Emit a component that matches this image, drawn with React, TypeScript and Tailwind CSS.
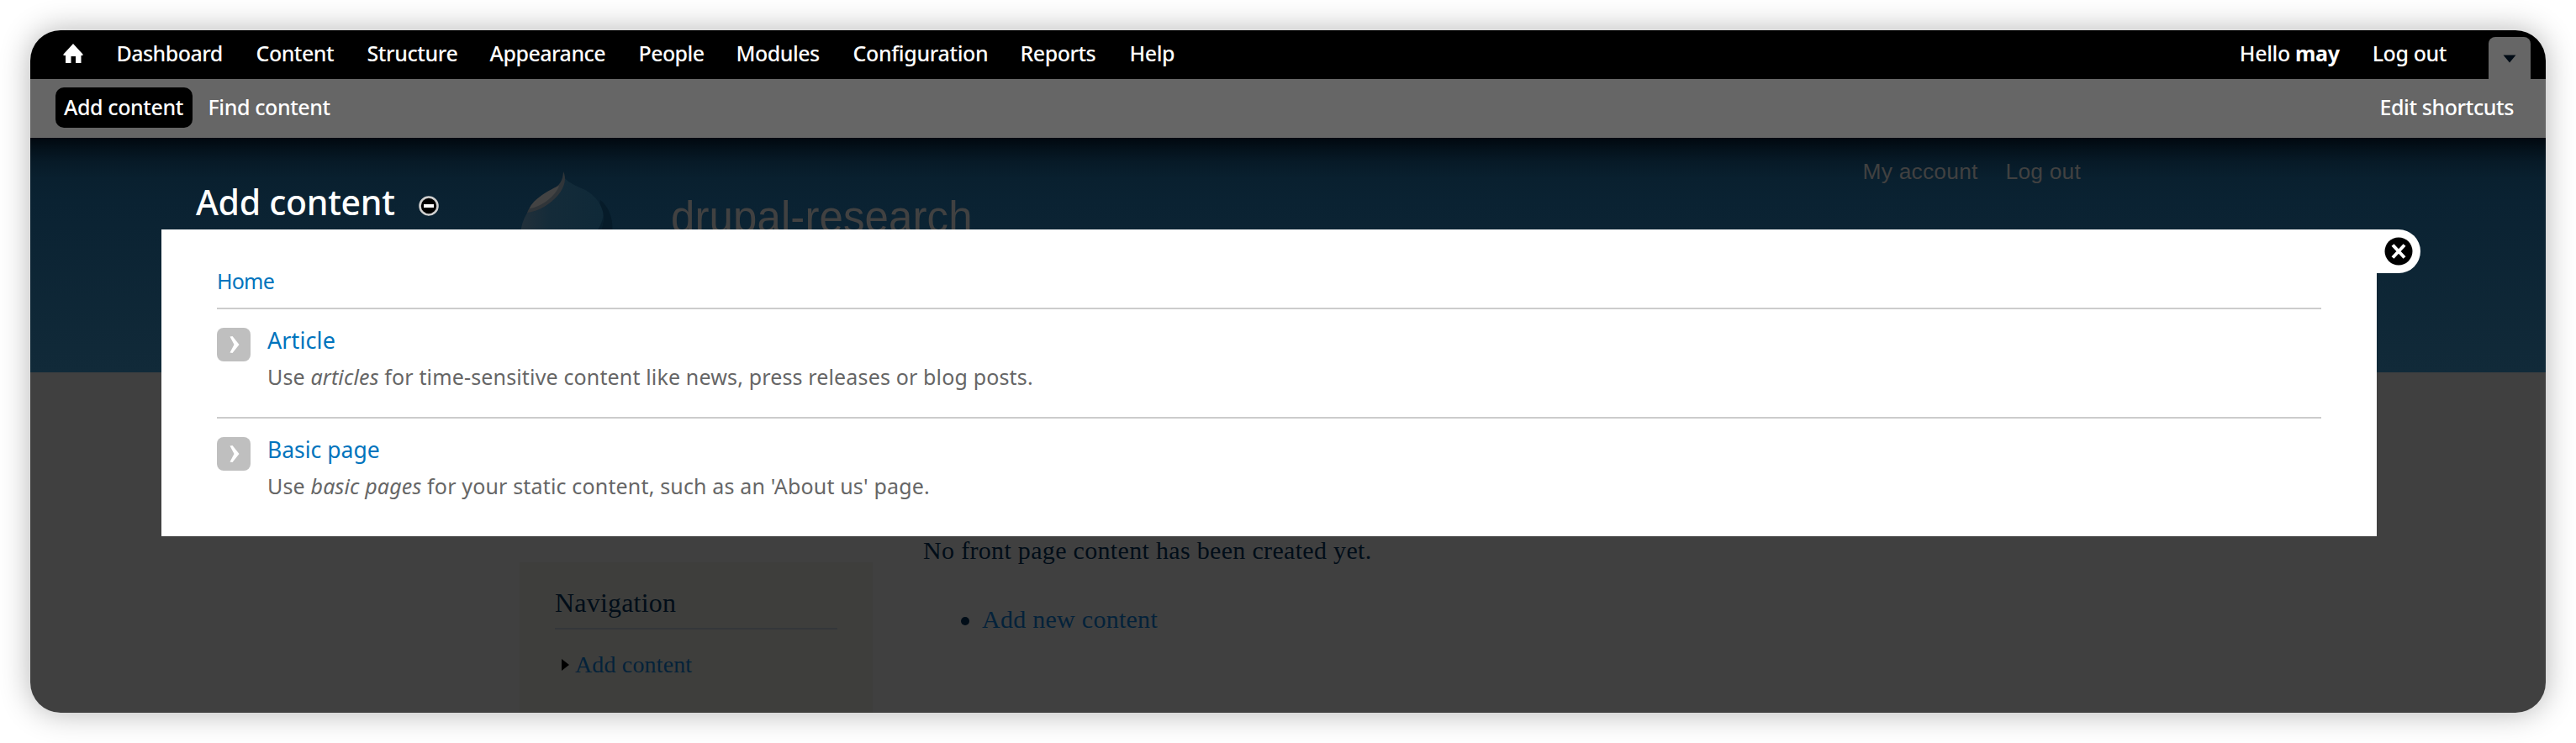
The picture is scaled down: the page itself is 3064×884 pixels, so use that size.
import type { ReactNode } from "react";

const menu: { label: string; cls: string }[] = [
  { label: "Dashboard", cls: "w-[166px] tracking-[-0.55px]" },
  { label: "Content", cls: "w-[132px] tracking-[-0.5px]" },
  { label: "Structure", cls: "w-[146px] tracking-[-0.4px]" },
  { label: "Appearance", cls: "w-[177px] tracking-[-0.5px]" },
  { label: "People", cls: "w-[116px] tracking-[-0.6px]" },
  { label: "Modules", cls: "w-[139px] tracking-[-0.5px]" },
  { label: "Configuration", cls: "w-[199px] tracking-[-0.35px]" },
  { label: "Reports", cls: "w-[130px] tracking-[-0.5px]" },
  { label: "Help", cls: "w-[60px] tracking-[-0.4px]" },
];

function HomeIcon() {
  return (
    <svg width="24" height="24" viewBox="0 0 24 24" fill="#fff">
      <path d="M12 0 L23.5 12.5 V14 H21.5 V23 H15 V15 H9.5 V23 H3 V14 H0.5 V12.5 Z" />
    </svg>
  );
}

function Droplet() {
  return (
    <svg width="120" height="75" viewBox="0 0 120 75" className="shrink-0">
      <defs>
        <linearGradient id="drop" x1="0" y1="0" x2="1" y2="0">
          <stop offset="0" stopColor="#22303a" />
          <stop offset="0.35" stopColor="#142b39" />
          <stop offset="1" stopColor="#0f2938" />
        </linearGradient>
      </defs>
      <path d="M96 34 C106 42 112 56 110 75 H92 Z" fill="#061b29" />
      <path d="M52 2 C52 10 60 14 78 22 C92 30 100 42 100 56 C99 64 97 70 95 75 H1 C2 60 8 48 18 38 C32 24 50 22 52 2 Z" fill="url(#drop)" />
      <path d="M100 50 C100 62 97 70 95 75 H88 C94 70 99 60 100 50 Z" fill="#081f2e" />
      <path d="M52 0 C56 8 54 18 46 28 C36 39 24 47 9 49 C14 36 26 28 38 22 C48 17 52 10 52 0 Z" fill="#303539" />
      <path d="M47 17 C44 27 28 42 12 44 C14 36 30 24 47 17 Z" fill="#434343" />
    </svg>
  );
}

function Chevron() {
  return (
    <svg width="40" height="40" viewBox="0 0 40 40" className="mt-[22px] shrink-0">
      <rect width="40" height="40" rx="8" fill="#bfbfbf" />
      <path d="M15.5 10.5 L18.5 10 L26.5 20 L18.5 30 L15.5 29.5 L20.5 20 Z" fill="#fff" />
    </svg>
  );
}

function Item({ title, titleCls, textCls, children }: { title: string; titleCls: string; textCls: string; children: ReactNode }) {
  return (
    <li className="flex h-[130px] border-t-2 border-[#ccc]">
      <Chevron />
      <div className="ml-5 pt-[17px]">
        <a className={`block h-10 leading-10 text-[#0074bd] ${titleCls}`}>{title}</a>
        <p className={`mt-[3px] h-10 whitespace-nowrap text-[25px] leading-10 text-[#666] ${textCls}`}>{children}</p>
      </div>
    </li>
  );
}

function BackgroundPage() {
  return (
    <div className="flex h-full flex-col bg-[#404040]">
      <header className="flex h-[279px] shrink-0 justify-between bg-[linear-gradient(to_bottom,#01080f_0px,#04121c_14px,#071a27_28px,#09202f_48px,#0a2232_75px,#112a39_279px)] pl-[582px] font-['Liberation_Sans',sans-serif] text-[#414141]">
        <div className="flex items-start">
          <div className="mt-10 h-[75px]"><Droplet /></div>
          <div className="ml-[60px] mt-[65px] text-[51px] leading-[60px] tracking-[0.1px]">drupal-research</div>
        </div>
        <nav className="mr-[553px] mt-[20px] flex h-10 gap-[33px] text-[26.4px] leading-10 tracking-[0.2px]">
          <a>My account</a>
          <a>Log out</a>
        </nav>
      </header>
      <div className="flex grow font-['Liberation_Serif',serif]">
        <aside className="ml-[582px] mt-[226px] h-[179px] w-[420px] bg-[#3e3e3c] px-[42px]">
          <h2 className="mt-[28px] h-[52px] border-b-2 border-[#34373a] text-[32px] leading-10 tracking-[0.2px] text-[#010d18]">Navigation</h2>
          <div className="mt-[22px] flex items-center pl-2">
            <svg width="10" height="14" viewBox="0 0 10 14" fill="#000"><path d="M0 0 L9 7 L0 14 Z" /></svg>
            <a className="ml-[6px] text-[28px] leading-10 tracking-[0.15px] text-[#04223a]">Add content</a>
          </div>
        </aside>
        <main className="ml-[60px] mt-[192px] text-[30px] leading-10">
          <p className="tracking-[0.32px] text-[#010d18]">No front page content has been created yet.</p>
          <div className="mt-[42px] flex items-center pl-[45px]">
            <span className="mt-[3px] size-[10px] rounded-full bg-[#010d18]" />
            <a className="ml-[15px] tracking-[0.27px] text-[#04223a]">Add new content</a>
          </div>
        </main>
      </div>
    </div>
  );
}

function Overlay() {
  return (
    <section className="absolute left-[156px] top-0 w-[2635px]">
      <div className="flex h-[109px] items-center pl-[41px] pt-[43px] text-white">
        <h1 className="text-[41px] font-medium leading-[60px] tracking-[-0.3px]">Add content</h1>
        <svg width="24" height="24" viewBox="0 0 24 24" className="ml-[28px] mt-[10px]">
          <circle cx="12" cy="12" r="10.5" fill="#000" stroke="#cfcfcf" strokeWidth="2.6" />
          <rect x="6" y="10" width="12" height="4" fill="#fff" />
        </svg>
      </div>
      <div className="relative h-[365px] bg-white px-[66px]">
        <div className="absolute left-full top-0 flex h-[52px] w-[52px] items-center justify-center rounded-r-[26px] bg-white">
          <svg width="34" height="34" viewBox="0 0 34 34">
            <circle cx="17" cy="17" r="16.5" fill="#000" />
            <path d="M10 9.5 L24 24.5 M24 9.5 L10 24.5" stroke="#fff" strokeWidth="4" />
          </svg>
        </div>
        <div className="flex h-[93px] items-center pt-[31px] text-[25px] tracking-[-0.8px] text-[#0074bd]">Home</div>
        <ul>
          <Item title="Article" titleCls="text-[27px] tracking-[0.1px]" textCls="tracking-[0.15px]">
            Use <em>articles</em> for time-sensitive content like news, press releases or blog posts.
          </Item>
          <Item title="Basic page" titleCls="text-[26.5px]" textCls="tracking-[0.16px]">
            Use <em>basic pages</em> for your static content, such as an 'About us' page.
          </Item>
        </ul>
      </div>
    </section>
  );
}

export default function App() {
  return (
    <div className="h-[884px] w-[3064px] overflow-hidden bg-white p-9 font-['Noto_Sans',sans-serif]">
      <div className="h-[812px] w-[2992px] rounded-[36px] shadow-[0_0_36px_rgba(0,0,0,0.3)]">
        <div className="flex h-full flex-col overflow-hidden rounded-[36px]">
          <div className="flex h-[58px] shrink-0 items-center justify-between bg-black text-[25px] font-medium text-white">
            <div className="flex items-center pb-[3px] pl-[39px]">
              <HomeIcon />
              <nav className="ml-[39.5px] flex">
                {menu.map((m) => (
                  <a key={m.label} className={m.cls}>{m.label}</a>
                ))}
              </nav>
            </div>
            <div className="flex h-full items-center pr-[18px]">
              <span className="pb-[3px] tracking-[-0.35px]">Hello <b className="font-bold">may</b></span>
              <a className="ml-[39px] pb-[3px] tracking-[-0.4px]">Log out</a>
              <button className="ml-[50px] flex h-[50px] w-[50px] justify-center self-end rounded-t-[8px] bg-[#666] pt-[21px]">
                <svg width="16" height="10" viewBox="0 0 16 10"><path d="M0.5 0.5 H15.5 L8 9.5 Z" fill="#020c16" /></svg>
              </button>
            </div>
          </div>
          <div className="flex h-[70px] shrink-0 items-center justify-between bg-[#666] pb-[2px] pl-[30px] pr-[38px] text-[25px] font-medium tracking-[-0.4px] text-white">
            <div className="flex items-center">
              <a className="flex h-12 w-[163px] items-center rounded-[10px] bg-black pb-px pl-[10px]">Add content</a>
              <a className="pb-px pl-[18.5px]">Find content</a>
            </div>
            <a className="pb-px">Edit shortcuts</a>
          </div>
          <div className="relative grow overflow-hidden">
            <BackgroundPage />
            <Overlay />
          </div>
        </div>
      </div>
    </div>
  );
}
